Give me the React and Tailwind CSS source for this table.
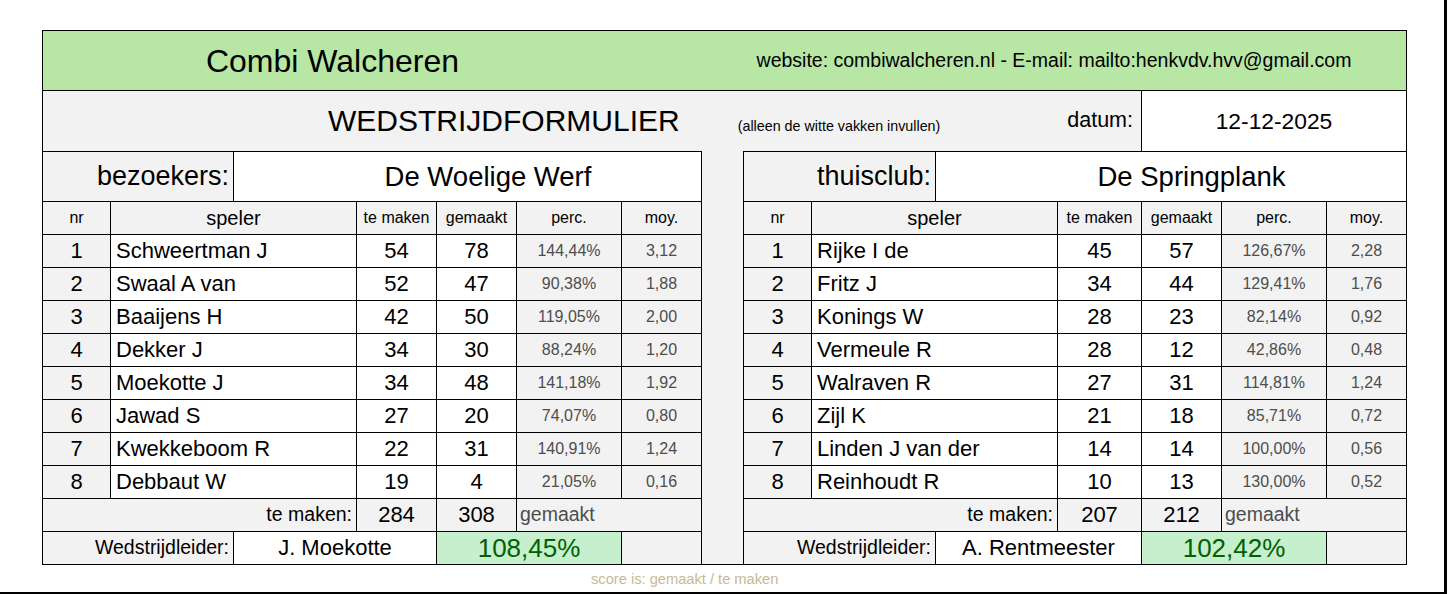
import React from "react";

const visitors = {
  label: "bezoekers:",
  team: "De Woelige Werf",
  leider: "J. Moekotte",
  totalMaken: 284,
  totalGemaakt: 308,
  score: "108,45%",
  players: [
    ["Schweertman J", 54, 78, "144,44%", "3,12"],
    ["Swaal A van", 52, 47, "90,38%", "1,88"],
    ["Baaijens H", 42, 50, "119,05%", "2,00"],
    ["Dekker J", 34, 30, "88,24%", "1,20"],
    ["Moekotte J", 34, 48, "141,18%", "1,92"],
    ["Jawad S", 27, 20, "74,07%", "0,80"],
    ["Kwekkeboom R", 22, 31, "140,91%", "1,24"],
    ["Debbaut W", 19, 4, "21,05%", "0,16"],
  ],
};

const home = {
  label: "thuisclub:",
  team: "De Springplank",
  leider: "A. Rentmeester",
  totalMaken: 207,
  totalGemaakt: 212,
  score: "102,42%",
  players: [
    ["Rijke I de", 45, 57, "126,67%", "2,28"],
    ["Fritz J", 34, 44, "129,41%", "1,76"],
    ["Konings W", 28, 23, "82,14%", "0,92"],
    ["Vermeule R", 28, 12, "42,86%", "0,48"],
    ["Walraven R", 27, 31, "114,81%", "1,24"],
    ["Zijl K", 21, 18, "85,71%", "0,72"],
    ["Linden J van der", 14, 14, "100,00%", "0,56"],
    ["Reinhoudt R", 10, 13, "130,00%", "0,52"],
  ],
};

// one side of the form (visitors left, home right)
const TeamTable = ({ data, side }) => {
  const left = side === "left";
  const cols = left
    ? "grid grid-cols-[68px_246px_80px_80px_105px_79px]"
    : "grid grid-cols-[68px_246px_84px_80px_105px_79px]";

  return (
    <div
      className={
        left
          ? "w-[659px] border-t border-r border-black flex flex-col"
          : "w-[663px] border-t border-l border-black flex flex-col"
      }
    >
      {/* team name */}
      <div className="flex h-[50px] border-b border-black">
        <div
          className={
            (left ? "w-[191px]" : "w-[192px]") +
            " border-r border-black flex items-center justify-end pr-[4px] text-[27px]"
          }
        >
          {data.label}
        </div>
        <div className="flex-1 bg-white flex items-center justify-center pl-[41px] text-[27.5px]">
          {data.team}
        </div>
      </div>

      {/* column heads */}
      <div className={cols + " h-[33px] border-b border-black text-[16px]"}>
        <div className="border-r border-black flex items-center justify-center">nr</div>
        <div className="border-r border-black flex items-center justify-center text-[20px]">speler</div>
        <div className="border-r border-black flex items-center justify-center">te maken</div>
        <div className="border-r border-black flex items-center justify-center">gemaakt</div>
        <div className="border-r border-black flex items-center justify-center">perc.</div>
        <div className="flex items-center justify-center">moy.</div>
      </div>

      {/* players */}
      {data.players.map((p, i) => (
        <div key={i} className={cols + " h-[33px] border-b border-black text-[22px]"}>
          <div className="border-r border-black flex items-center justify-center">{i + 1}</div>
          <div className="border-r border-black bg-white flex items-center pl-[5px]">{p[0]}</div>
          <div className="border-r border-black bg-white flex items-center justify-center">{p[1]}</div>
          <div className="border-r border-black bg-white flex items-center justify-center">{p[2]}</div>
          <div className="border-r border-black flex items-center justify-center text-[16px] text-[#4d4d4d]">
            {p[3]}
          </div>
          <div className="flex items-center justify-center text-[16px] text-[#4d4d4d]">{p[4]}</div>
        </div>
      ))}

      {/* totals */}
      <div className="flex h-[33px] border-b border-black">
        <div className="w-[314px] border-r border-black flex items-center justify-end pr-[4px] text-[19.5px]">
          te maken:
        </div>
        <div
          className={
            (left ? "w-[80px]" : "w-[84px]") +
            " border-r border-black flex items-center justify-center text-[22px]"
          }
        >
          {data.totalMaken}
        </div>
        <div className="w-[80px] border-r border-black flex items-center justify-center text-[22px]">
          {data.totalGemaakt}
        </div>
        <div className="flex-1 flex items-center pl-[3px] text-[19.5px] text-[#4d4d4d]">gemaakt</div>
      </div>

      {/* wedstrijdleider */}
      <div className="flex h-[32px]">
        <div
          className={
            (left ? "w-[191px]" : "w-[192px]") +
            " border-r border-black flex items-center justify-end pr-[4px] text-[19.5px]"
          }
        >
          Wedstrijdleider:
        </div>
        <div
          className={
            (left ? "w-[203px]" : "w-[206px]") +
            " border-r border-black bg-white flex items-center justify-center text-[22px]"
          }
        >
          {data.leider}
        </div>
        <div className="w-[185px] border-r border-black bg-[#c6efce] text-[#006100] flex items-center justify-center text-[26px]">
          {data.score}
        </div>
        <div className="flex-1" />
      </div>
    </div>
  );
};

export default function App() {
  return (
    <div className="w-[1447px] h-[594px] border-r-[3px] border-b-[2px] border-black bg-white pt-[30px] pl-[42px] font-['Liberation_Sans',Arial,sans-serif] leading-none text-black">
      <div className="w-[1365px] border border-black bg-[#f2f2f2] flex flex-col">
        {/* title bar */}
        <div className="flex h-[60px] border-b border-black bg-[#b7e6a5]">
          <div className="w-[579px] flex items-center justify-center text-[32px]">Combi Walcheren</div>
          <div className="w-[80px]" />
          <div className="w-[704px] flex items-center justify-center text-[19.5px]">
            website: combiwalcheren.nl - E-mail: mailto:henkvdv.hvv@gmail.com
          </div>
        </div>

        {/* form title + date */}
        <div className="flex h-[60px]">
          <div className="flex-1 flex items-center pl-[285px] pr-[8px]">
            <div className="flex items-baseline">
              <span className="text-[30px]">WEDSTRIJDFORMULIER</span>
              <span className="ml-[58px] text-[14.3px]">(alleen de witte vakken invullen)</span>
            </div>
            <span className="ml-auto text-[21.5px]">datum:</span>
          </div>
          <div className="w-[265px] border-l border-black bg-white flex items-center justify-center text-[22.8px]">
            12-12-2025
          </div>
        </div>

        {/* both teams */}
        <div className="flex">
          <TeamTable data={visitors} side="left" />
          <div className="w-[41px]" />
          <TeamTable data={home} side="right" />
        </div>
      </div>

      <div className="h-[29px] flex items-center pl-[549px] text-[14.67px] text-[#c8b993]">
        score is: gemaakt / te maken
      </div>
    </div>
  );
}
